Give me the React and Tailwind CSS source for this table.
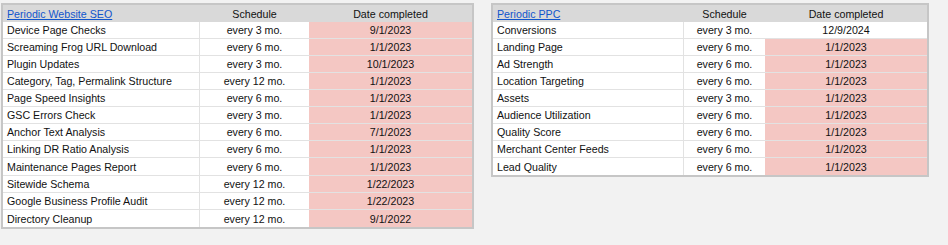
const seoRows = [
  ['Device Page Checks', 'every 3 mo.', '9/1/2023'],
  ['Screaming Frog URL Download', 'every 6 mo.', '1/1/2023'],
  ['Plugin Updates', 'every 3 mo.', '10/1/2023'],
  ['Category, Tag, Permalink Structure', 'every 12 mo.', '1/1/2023'],
  ['Page Speed Insights', 'every 6 mo.', '1/1/2023'],
  ['GSC Errors Check', 'every 3 mo.', '1/1/2023'],
  ['Anchor Text Analysis', 'every 6 mo.', '7/1/2023'],
  ['Linking DR Ratio Analysis', 'every 6 mo.', '1/1/2023'],
  ['Maintenance Pages Report', 'every 6 mo.', '1/1/2023', true],
  ['Sitewide Schema', 'every 12 mo.', '1/22/2023'],
  ['Google Business Profile Audit', 'every 12 mo.', '1/22/2023'],
  ['Directory Cleanup', 'every 12 mo.', '9/1/2022'],
]

const ppcRows = [
  ['Conversions', 'every 3 mo.', '12/9/2024', false, true],
  ['Landing Page', 'every 6 mo.', '1/1/2023'],
  ['Ad Strength', 'every 6 mo.', '1/1/2023'],
  ['Location Targeting', 'every 6 mo.', '1/1/2023'],
  ['Assets', 'every 3 mo.', '1/1/2023'],
  ['Audience Utilization', 'every 6 mo.', '1/1/2023'],
  ['Quality Score', 'every 6 mo.', '1/1/2023'],
  ['Merchant Center Feeds', 'every 6 mo.', '1/1/2023'],
  ['Lead Quality', 'every 6 mo.', '1/1/2023'],
]

const Sheet = ({ title, rows, width, labelW, schedW }) => (
  <div className="border-2 border-[#c6c6c6] bg-white" style={{ width }}>
    {/* header */}
    <div className="flex h-[17px] bg-[#d9d9d9] items-end pb-[2px] leading-[12px]">
      <div className="pl-[4px] shrink-0" style={{ width: labelW }}>
        <a href="#" className="text-[#1155cc] underline">{title}</a>
      </div>
      <div className="text-center shrink-0" style={{ width: schedW }}>Schedule</div>
      <div className="text-center flex-1">Date completed</div>
    </div>

    {rows.map(([label, sched, date, tall, white]) => (
      <div
        key={label}
        className={`flex border-b border-[#e2e2e2] last:border-b-0 ${tall ? 'h-[18px]' : 'h-[17px]'}`}
      >
        <div
          className="shrink-0 border-r border-[#e2e2e2] pl-[4px] flex items-end pb-[2px] leading-[12px] whitespace-nowrap"
          style={{ width: labelW }}
        >
          {label}
        </div>
        <div
          className="shrink-0 flex items-end justify-center pb-[2px] leading-[12px]"
          style={{ width: schedW }}
        >
          {sched}
        </div>
        <div
          className={`flex-1 flex items-end justify-center pb-[2px] leading-[12px] ${
            white ? 'bg-white' : 'bg-[#f4c7c3]'
          }`}
        >
          {date}
        </div>
      </div>
    ))}
  </div>
)

export default function App() {
  return (
    <div className="w-[948px] h-[245px] bg-[#f2f2f2] text-[10.67px] text-[#111] font-['Liberation_Sans',Arial,sans-serif] overflow-hidden">
      <div className="flex items-start gap-[17px] pl-[1px] pt-[3px]">
        <Sheet title="Periodic Website SEO" rows={seoRows} width={473} labelW={197} schedW={109} />
        <Sheet title="Periodic PPC" rows={ppcRows} width={438} labelW={191} schedW={81} />
      </div>
    </div>
  )
}
